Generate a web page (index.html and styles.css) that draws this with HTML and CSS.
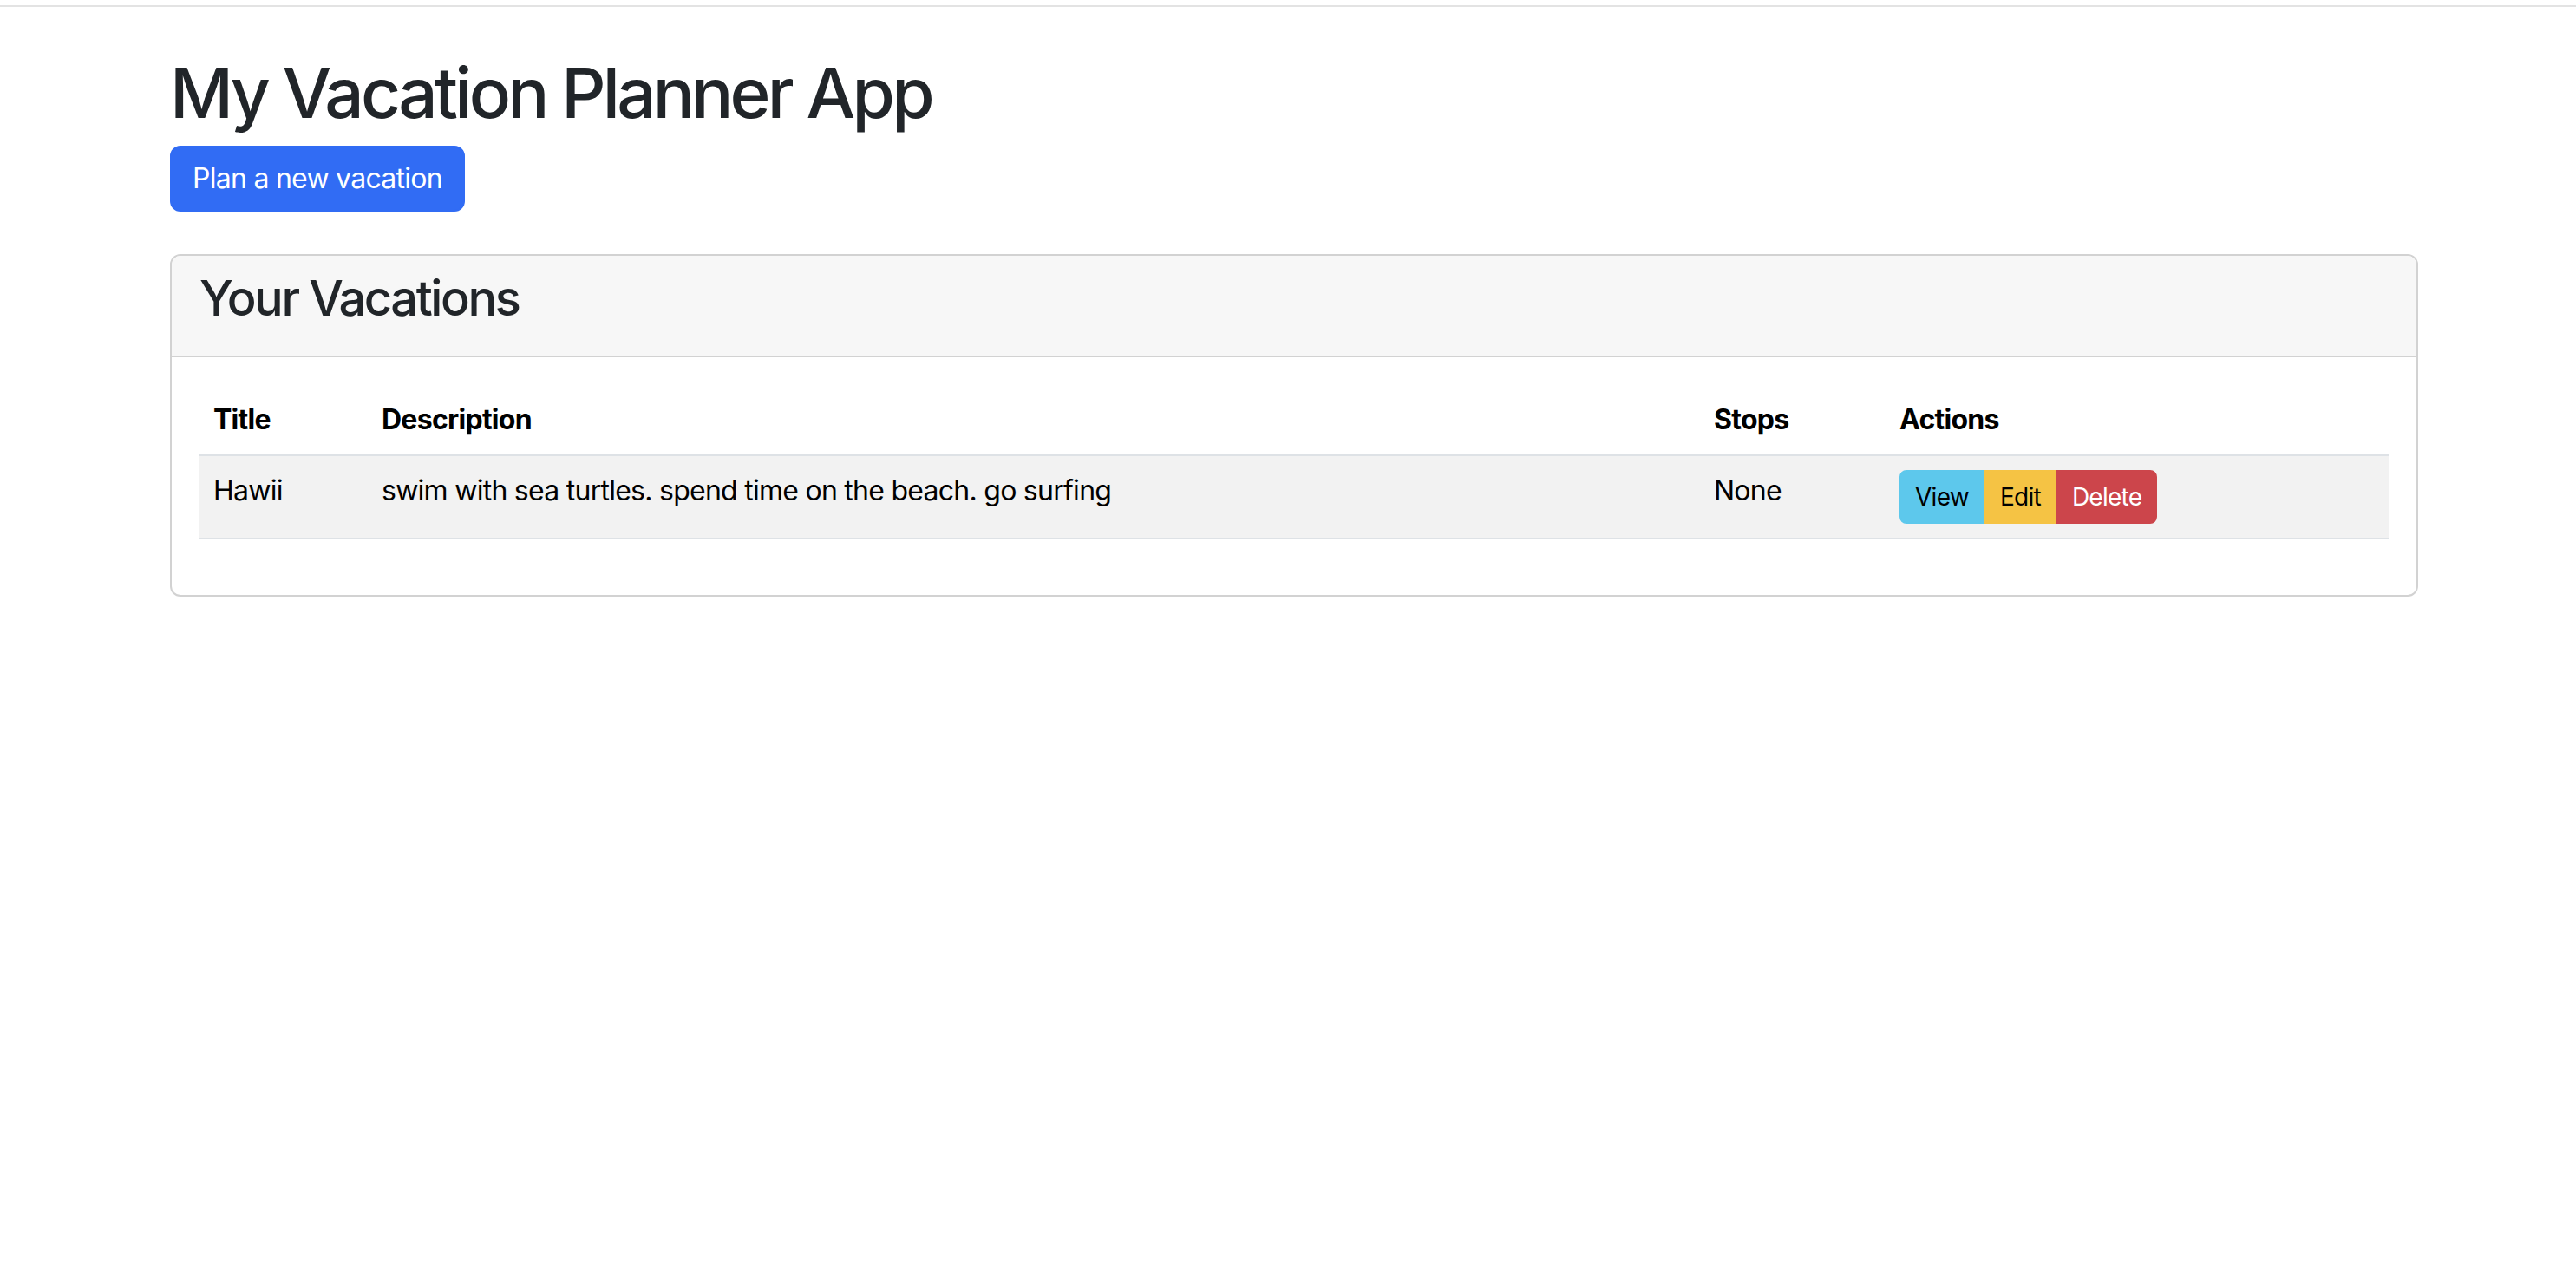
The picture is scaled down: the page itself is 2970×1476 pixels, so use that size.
FILE: index.html
```html
<!DOCTYPE html>
<html lang="en">
<head>
<meta charset="utf-8">
<title>My Vacation Planner App</title>
<link rel="stylesheet" href="styles.css">
</head>
<body>
<div class="topbar"></div>
<div class="container">
  <h1 class="page-title">My Vacation Planner App</h1>
  <a class="btn btn-primary" href="#">Plan a new vacation</a>
  <div class="card">
    <div class="card-header">
      <h3 class="card-title">Your Vacations</h3>
    </div>
    <div class="card-body">
      <table class="table">
        <colgroup>
          <col class="col-title">
          <col class="col-desc">
          <col class="col-stops">
          <col class="col-actions">
        </colgroup>
        <thead>
          <tr>
            <th>Title</th>
            <th>Description</th>
            <th>Stops</th>
            <th>Actions</th>
          </tr>
        </thead>
        <tbody>
          <tr class="striped">
            <td>Hawii</td>
            <td>swim with sea turtles. spend time on the beach. go surfing</td>
            <td>None</td>
            <td>
              <div class="btn-group">
                <a class="btn btn-sm btn-info" href="#">View</a>
                <a class="btn btn-sm btn-warning" href="#">Edit</a>
                <a class="btn btn-sm btn-danger" href="#">Delete</a>
              </div>
            </td>
          </tr>
        </tbody>
      </table>
    </div>
  </div>
</div>
</body>
</html>
```
FILE: styles.css
```css
* { box-sizing: border-box; }
html, body { margin: 0; padding: 0; }
body {
  font-family: Inter, "Noto Sans", "Liberation Sans", sans-serif;
  font-size: 32px;
  line-height: 1.5;
  letter-spacing: -0.023em;
  color: #212529;
  background: #ffffff;
}
.topbar {
  margin-top: 6px;
  height: 2px;
  background: #e3e3e3;
}
.container {
  width: 2592px;
  margin-left: 196px;
}
.page-title {
  margin: 51px 0 13px;
  font-size: 80px;
  font-weight: 500;
  line-height: 96px;
  letter-spacing: -0.047em;
  color: #212529;
}
.btn {
  display: inline-block;
  padding: 12px 24px;
  font-size: 32px;
  line-height: 48px;
  text-decoration: none;
  border: 2px solid transparent;
  border-radius: 12px;
}
.btn-primary {
  background: #316cf4;
  border-color: #316cf4;
  color: #ffffff;
}
.card {
  margin-top: 49px;
  border: 2px solid #d2d2d2;
  border-radius: 12px;
  overflow: hidden;
}
.card-header {
  background: #f7f7f7;
  border-bottom: 2px solid #d2d2d2;
  padding: 16px 32px;
}
.card-title {
  margin: 0 0 16px;
  font-size: 56px;
  font-weight: 500;
  line-height: 67px;
  letter-spacing: -0.043em;
  color: #212529;
}
.card-body {
  padding: 32px;
}
.table {
  width: 100%;
  table-layout: fixed;
  border-collapse: collapse;
  margin-bottom: 32px;
  color: #000000;
  vertical-align: top;
}
.col-title { width: 194px; }
.col-desc { width: 1536px; }
.col-stops { width: 214px; }
.table th, .table td {
  padding: 16px;
  text-align: left;
  border-bottom: 2px solid #dee2e6;
  vertical-align: top;
}
.table th { font-weight: 700; }
.table tr.striped td { background: #f2f2f2; }
.btn-group {
  display: inline-flex;
  vertical-align: middle;
}
.btn-sm {
  padding: 8px 16px;
  font-size: 28px;
  line-height: 42px;
  border-radius: 0;
}
.btn-group .btn-sm:first-child { border-radius: 8px 0 0 8px; }
.btn-group .btn-sm:last-child { border-radius: 0 8px 8px 0; }
.btn-info { background: #5dc8ec; border-color: #5dc8ec; color: #000000; }
.btn-warning { background: #f5c344; border-color: #f5c344; color: #000000; }
.btn-danger { background: #cc454b; border-color: #cc454b; color: #ffffff; }
```
